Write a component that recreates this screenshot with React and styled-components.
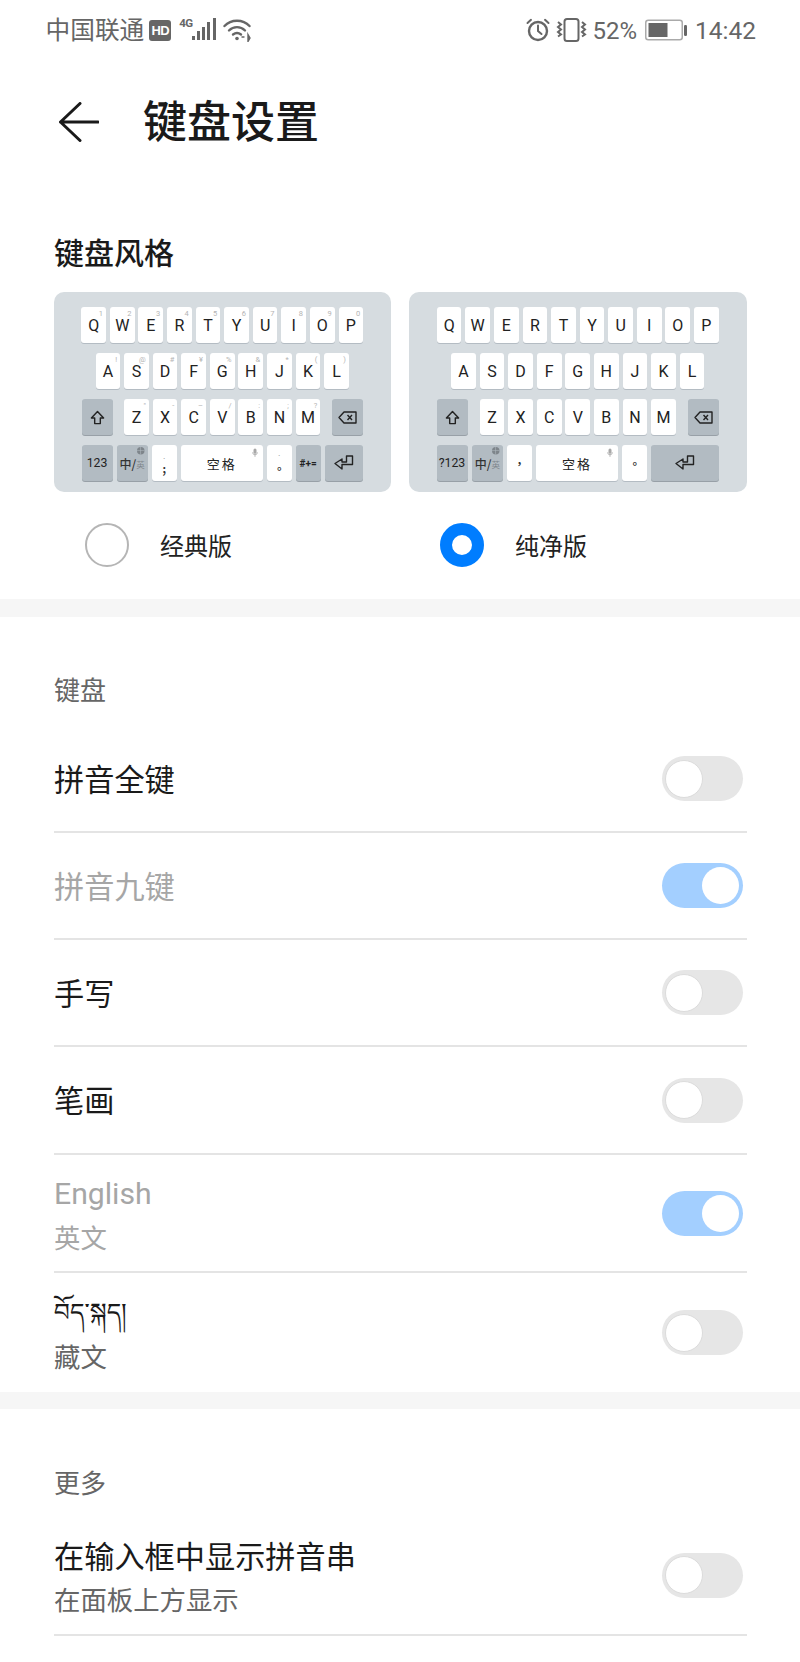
import React from 'react';
import styled, { createGlobalStyle } from 'styled-components';

const CJK = `Roboto, "Noto Sans CJK SC", "Noto Sans Tibetan", "Noto Serif Tibetan", sans-serif`;
const Global = createGlobalStyle`
  html, body { margin: 0; padding: 0; background: #fff; }
  body { font-family: ${CJK}; color: #1a1a1a; }
  * { box-sizing: border-box; }
`;

const Page = styled.div`width: 800px; height: 1662px; overflow: hidden; background: #fff;`;

const StatusBar = styled.div`
  height: 60px; display: flex; align-items: center; justify-content: space-between;
  padding: 0 44px 0 45.5px; color: #666;
`;
const StatusGroup = styled.div`display: flex; align-items: center;`;
const Glyph = styled.svg`flex: none; margin-left: ${p => p.$ml || 0}px;`;
const Carrier = styled.span`font-size: 24.7px; line-height: 32px; margin-top: 2px;`;
const HdBadge = styled.span`
  width: 22px; height: 21px; margin-left: 5px; background: #666; border-radius: 3px; color: #fff;
  font: 700 13px/21px "Liberation Sans", sans-serif; text-align: center; letter-spacing: -0.5px;
`;
const NetLabel = styled.span`
  align-self: flex-start; margin: 4px 0 0 8px; width: 13px; font: 700 11.5px/13px Roboto, sans-serif;
  letter-spacing: -0.7px; color: #666;
`;
const StatusText = styled.span`
  font: 400 ${p => p.$size || 24}px/32px Roboto, sans-serif; color: #666; margin: 2px 0 0 ${p => p.$ml || 0}px;
`;

const TopBar = styled.div`height: 124px; display: flex; align-items: center; padding-left: 59px; gap: 44px;`;
const Title = styled.h1`margin: 2px 0 0; font-size: 44px; line-height: 60px; font-weight: 500; color: #1a1a1a;`;

const StyleHeading = styled.h2`
  margin: 50px 0 18px 54px; font-size: 30px; line-height: 40px; font-weight: 500; color: #1a1a1a;
`;
const Columns = styled.div`display: grid; grid-template-columns: 337px 338px; column-gap: 18px; padding-left: 54px;`;
const Board = styled.div`
  height: 200px; background: #d6dce0; border-radius: 10px; padding: 15px 28px 0 27.5px;
  display: flex; flex-direction: column; gap: 10px;
`;
const KeyRow = styled.div`
  height: 36px; display: flex; gap: 3.9px; justify-content: ${p => p.$justify || 'center'};
`;
const KeyGroup = styled.div`display: flex; gap: 3.9px;`;
const Key = styled.div`
  position: relative; flex: none; width: ${p => p.$w || 24.7}px; height: 36px; border-radius: 3px;
  background: ${p => (p.$fn ? '#b2bbc2' : '#fff')}; box-shadow: 0 1px 0 ${p => (p.$fn ? '#98a0a7' : '#b4bcc3')};
  display: flex; align-items: center; justify-content: center;
  font-family: Roboto, "Noto Sans CJK SC", sans-serif; font-size: ${p => p.$size || 16}px; color: #222;
  letter-spacing: ${p => p.$ls || 0}px;
`;
const Hint = styled.span`
  position: absolute; top: 2px; right: 3px; font: 400 7.5px/9px Roboto, sans-serif; color: #b4b4b4;
`;
const PunctTop = styled.span`
  position: absolute; top: 6px; left: 0; right: 0; text-align: center; font: 400 9px/10px Roboto, sans-serif; color: #888;
`;
const PunctMark = styled.span`
  font: 700 11px/14px "Noto Sans CJK TC", sans-serif; margin-top: ${p => p.$top || 0}px; color: #333;
`;
const Corner = styled.span`position: absolute; top: ${p => p.$top || 2}px; right: ${p => p.$right || 3}px; display: flex;`;
const SwitchLabel = styled.span`font: 500 12px/16px "Noto Sans CJK SC", sans-serif; color: #333; margin-top: 2px;`;
const SwitchSub = styled.span`font: 400 8.5px/16px "Noto Sans CJK SC", sans-serif; color: #7f868c; margin-top: 2px;`;

const Options = styled.div`display: grid; grid-template-columns: 337px 338px; column-gap: 18px; padding: 31px 0 32px 54px;`;
const Option = styled.div`display: flex; align-items: center; padding-left: 31px; gap: 31px;`;
const Radio = styled.span`
  flex: none; width: 44px; height: 44px; border-radius: 50%; background: #fff;
  border: ${p => (p.$on ? '12px solid #007dff' : '2px solid #b5b5b5')};
`;
const OptionLabel = styled.span`font-size: 24px; line-height: 32px; color: #222; margin-top: 4px;`;

const Gap = styled.div`height: ${p => p.$h}px; background: #f6f6f6;`;
const Section = styled.section`padding: 0 53px 0 54px;`;
const SectionLabel = styled.div`
  padding-top: ${p => p.$top}px; margin-bottom: ${p => p.$bottom}px; font-size: 26px; line-height: 40px; color: #666;
`;
const Row = styled.div`
  height: ${p => p.$h}px; display: flex; align-items: center; justify-content: space-between; padding-right: 4px;
  border-bottom: ${p => (p.$last ? 'none' : '2px solid #e4e4e4')};
`;
const RowText = styled.div`display: flex; flex-direction: column; margin-top: ${p => p.$top || 4}px;`;
const RowTitle = styled.div`
  font-size: ${p => p.$size || 30.2}px; line-height: 44px; color: ${p => (p.$dim ? '#a6a6a6' : '#1a1a1a')};
`;
const RowSub = styled.div`
  font-size: 26.4px; line-height: ${p => p.$lh || 42}px; color: ${p => (p.$dim ? '#a6a6a6' : '#666')};
`;
const Track = styled.span`
  width: 81px; height: 45px; border-radius: 23px; padding: ${p => (p.$on ? '4px' : '3px')}; display: flex; align-items: center;
  justify-content: ${p => (p.$on ? 'flex-end' : 'flex-start')};
  background: ${p => (p.$on ? '#a3cfff' : '#e6e6e6')};
`;
const Thumb = styled.span`
  width: ${p => (p.$on ? 37 : 38)}px; height: ${p => (p.$on ? 37 : 38)}px; border-radius: 50%; background: #fff;
  border: ${p => (p.$on ? 'none' : '1px solid #dcdcdc')};
`;

const Toggle = ({ on }) => <Track $on={on}><Thumb $on={on} /></Track>;

const Shift = () => (
  <svg width="15" height="15" viewBox="0 0 15 16" fill="none" stroke="#222" strokeWidth="1.5" strokeLinejoin="round">
    <path d="M7.5 1.5 14 8.5H10.5V14.5H4.5V8.5H1Z" />
  </svg>
);
const Backspace = () => (
  <svg width="19" height="13" viewBox="0 0 19 13" fill="none" stroke="#222" strokeWidth="1.4" strokeLinejoin="round">
    <path d="M6 1H18V12H6L1 6.5Z" /><path d="M9.5 4 14 9M14 4 9.5 9" />
  </svg>
);
const Enter = () => (
  <svg width="20" height="16" viewBox="0 0 20 16" fill="none" stroke="#222" strokeWidth="1.4" strokeLinejoin="round">
    <path d="M12.5 1H18.5V9.5H8V14L1 8.5 8 4V7H12.5Z" />
  </svg>
);
const Mic = () => (
  <svg width="6" height="9" viewBox="0 0 8 11" fill="#a8a8a8"><rect x="2" y="0" width="4" height="7" rx="2" /><path d="M3.4 7h1.2v4H3.4z" /><path d="M.5 5h.8a2.7 2.7 0 0 0 5.4 0h.8a3.5 3.5 0 0 1-7 0z" /></svg>
);
const Globe = () => (
  <svg width="7.5" height="7.5" viewBox="0 0 8 8" fill="#7e858b"><circle cx="4" cy="4" r="4" /><path d="M0 3.7h8v.6H0zM3.7 0h.6v8h-.6z" fill="#b2bbc2" /></svg>
);

const LETTERS = [
  ['Q', 'W', 'E', 'R', 'T', 'Y', 'U', 'I', 'O', 'P'],
  ['A', 'S', 'D', 'F', 'G', 'H', 'J', 'K', 'L'],
  ['Z', 'X', 'C', 'V', 'B', 'N', 'M'],
];
const HINTS = {
  Q: '1', W: '2', E: '3', R: '4', T: '5', Y: '6', U: '7', I: '8', O: '9', P: '0',
  A: '!', S: '@', D: '#', F: '¥', G: '%', H: '&', J: '*', K: '(', L: ')',
  Z: '"', X: '-', C: '–', V: '/', B: ':', N: ';', M: '?',
};

const Letter = ({ c, hints }) => <Key>{c}{hints && <Hint>{HINTS[c]}</Hint>}</Key>;

const Keyboard = ({ classic }) => (
  <Board>
    {LETTERS.slice(0, 2).map((r, i) => (
      <KeyRow key={i}>{r.map(c => <Letter key={c} c={c} hints={classic} />)}</KeyRow>
    ))}
    <KeyRow $justify="space-between">
      <Key $w={31} $fn><Shift /></Key>
      <KeyGroup>{LETTERS[2].map(c => <Letter key={c} c={c} hints={classic} />)}</KeyGroup>
      <Key $w={31} $fn><Backspace /></Key>
    </KeyRow>
    <KeyRow $justify="space-between">
      <Key $w={31} $fn $size={12.3}>{classic ? '123' : '?123'}</Key>
      <Key $w={31} $fn>
        <Corner><Globe /></Corner>
        <SwitchLabel>中/</SwitchLabel><SwitchSub>英</SwitchSub>
      </Key>
      <Key>
        {classic && <PunctTop>.</PunctTop>}
        <PunctMark $top={classic ? 9 : 0}>{classic ? ';' : '，'}</PunctMark>
      </Key>
      <Key $w={82} $size={13} $ls={2}>
        空格
        <Corner $top={3} $right={5}><Mic /></Corner>
      </Key>
      <Key>
        {classic && <PunctTop>·</PunctTop>}
        <PunctMark $top={classic ? 9 : 0}>。</PunctMark>
      </Key>
      {classic ? (
        <>
          <Key $fn $size={10}><b>#+=</b></Key>
          <Key $w={38.3} $fn><Enter /></Key>
        </>
      ) : (
        <Key $w={67.5} $fn><Enter /></Key>
      )}
    </KeyRow>
  </Board>
);

export default function App() {
  return (
    <Page>
      <Global />
      <StatusBar>
        <StatusGroup>
          <Carrier>中国联通</Carrier>
          <HdBadge>HD</HdBadge>
          <NetLabel>4G</NetLabel>
          <Glyph width="24" height="24" viewBox="0 0 24 24" fill="#666">
            <rect x="0" y="18" width="3" height="4" /><rect x="5" y="13" width="3" height="9" />
            <rect x="10" y="9" width="3" height="13" /><rect x="15" y="4" width="3" height="18" /><rect x="21" y="0" width="3" height="22" />
          </Glyph>
          <Glyph $ml={7} width="28" height="24" viewBox="0 0 28 24" fill="none" stroke="#666" strokeWidth="2.4" strokeLinecap="round">
            <path d="M1.5 8C8 1 20 1 26.5 8" /><path d="M6 12.5C10.5 8 17.5 8 22 12.5" /><path d="M10 16.5c2.5-2 5.5-2 8 0" />
            <circle cx="14" cy="20.5" r="1.8" fill="#666" stroke="none" />
            <path d="M19 19h2M25 16.5l2 3.5-2 3.5z" strokeWidth="1.4" fill="#666" />
          </Glyph>
        </StatusGroup>
        <StatusGroup>
          <Glyph width="24" height="24" viewBox="0 0 24 24" fill="none" stroke="#666" strokeWidth="2.4" strokeLinecap="round">
            <circle cx="12" cy="13" r="9" /><path d="M12 7.5V13l3.5 3" strokeWidth="2" /><path d="M1.5 5 5 1.8M22.5 5 19 1.8" strokeWidth="2" />
          </Glyph>
          <Glyph $ml={6} width="31" height="24" viewBox="0 0 31 24" fill="none" stroke="#666" strokeWidth="2">
            <rect x="8.5" y="1" width="14" height="22" rx="2.5" />
            <path d="M2 4l3 2.5-3 2.5 3 2.5-3 2.5 3 2.5-3 2" /><path d="M26 4l3 2.5-3 2.5 3 2.5-3 2.5 3 2.5-3 2" />
          </Glyph>
          <StatusText $ml={5}>52%</StatusText>
          <Glyph $ml={8} width="43" height="22" viewBox="0 0 43 22" fill="none">
            <rect x="0.75" y="1.25" width="36.5" height="19.5" rx="2.5" stroke="#aaa" strokeWidth="1.5" />
            <rect x="3.5" y="4" width="19" height="14" fill="#666" />
            <rect x="39" y="6" width="3" height="11" rx="1.2" fill="#666" />
          </Glyph>
          <StatusText $ml={7} $size={24.5}>14:42</StatusText>
        </StatusGroup>
      </StatusBar>

      <TopBar>
        <Glyph width="40" height="40" viewBox="0 0 40 40" fill="none" stroke="#1a1a1a" strokeWidth="3" strokeLinecap="round" strokeLinejoin="round">
          <path d="M1.5 20H39M21 1.5 1.5 20 21 38.5" />
        </Glyph>
        <Title>键盘设置</Title>
      </TopBar>

      <StyleHeading>键盘风格</StyleHeading>
      <Columns>
        <Keyboard classic />
        <Keyboard />
      </Columns>
      <Options>
        <Option><Radio /><OptionLabel>经典版</OptionLabel></Option>
        <Option><Radio $on /><OptionLabel>纯净版</OptionLabel></Option>
      </Options>
      <Gap $h={18} />

      <Section>
        <SectionLabel $top={54} $bottom={15}>键盘</SectionLabel>
        <Row $h={107}><RowText><RowTitle>拼音全键</RowTitle></RowText><Toggle /></Row>
        <Row $h={107}><RowText><RowTitle $dim>拼音九键</RowTitle></RowText><Toggle on /></Row>
        <Row $h={107}><RowText><RowTitle>手写</RowTitle></RowText><Toggle /></Row>
        <Row $h={108}><RowText><RowTitle>笔画</RowTitle></RowText><Toggle /></Row>
        <Row $h={118}>
          <RowText $top={8}><RowTitle $dim>English</RowTitle><RowSub $dim $lh={46}>英文</RowSub></RowText>
          <Toggle on />
        </Row>
        <Row $h={119} $last>
          <RowText $top={6}><RowTitle $size={25}>བོད་སྐད།</RowTitle><RowSub $lh={46}>藏文</RowSub></RowText>
          <Toggle />
        </Row>
      </Section>
      <Gap $h={17} />

      <Section>
        <SectionLabel $top={55} $bottom={12}>更多</SectionLabel>
        <Row $h={120}>
          <RowText $top={8}><RowTitle>在输入框中显示拼音串</RowTitle><RowSub>在面板上方显示</RowSub></RowText>
          <Toggle />
        </Row>
      </Section>
    </Page>
  );
}
